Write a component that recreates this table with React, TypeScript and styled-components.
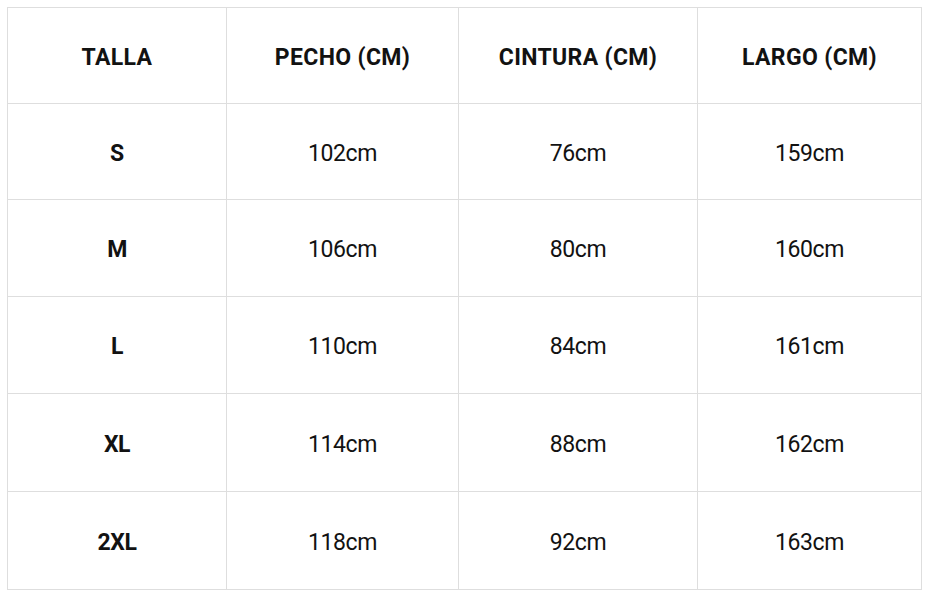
import styled, { createGlobalStyle } from "styled-components";

const GlobalStyle = createGlobalStyle`
  html, body {
    margin: 0;
    padding: 0;
    background: #ffffff;
  }
  body {
    font-family: Roboto, "Liberation Sans", Arial, sans-serif;
  }
`;

const Page = styled.div`
  padding: 7px 0 0 7px;
  width: 929px;
  height: 597px;
  box-sizing: border-box;
`;

const Table = styled.div`
  display: grid;
  grid-template-columns: 219px 232px 239px 224px;
  grid-template-rows: 96px 96px 97px 97px 98px 98px;
  width: 915px;
  border-top: 1px solid #dedede;
  border-left: 1px solid #dedede;
  box-sizing: border-box;
`;

const Cell = styled.div<{ $head?: boolean; $bold?: boolean }>`
  display: flex;
  align-items: center;
  justify-content: center;
  padding-top: 3px;
  border-right: 1px solid #dedede;
  border-bottom: 1px solid #dedede;
  color: #121212;
  font-size: 23px;
  font-weight: ${(p) => (p.$head || p.$bold ? 700 : 400)};
  letter-spacing: ${(p) => (p.$head ? "0.35px" : "-0.4px")};
`;

const headers = ["TALLA", "PECHO (CM)", "CINTURA (CM)", "LARGO (CM)"];

const rows = [
  ["S", "102cm", "76cm", "159cm"],
  ["M", "106cm", "80cm", "160cm"],
  ["L", "110cm", "84cm", "161cm"],
  ["XL", "114cm", "88cm", "162cm"],
  ["2XL", "118cm", "92cm", "163cm"],
];

export default function App() {
  return (
    <>
      <GlobalStyle />
      <Page>
        <Table>
          {headers.map((h) => (
            <Cell key={h} $head>
              {h}
            </Cell>
          ))}
          {rows.map((row) =>
            row.map((v, i) => (
              <Cell key={row[0] + i} $bold={i === 0}>
                {v}
              </Cell>
            ))
          )}
        </Table>
      </Page>
    </>
  );
}
